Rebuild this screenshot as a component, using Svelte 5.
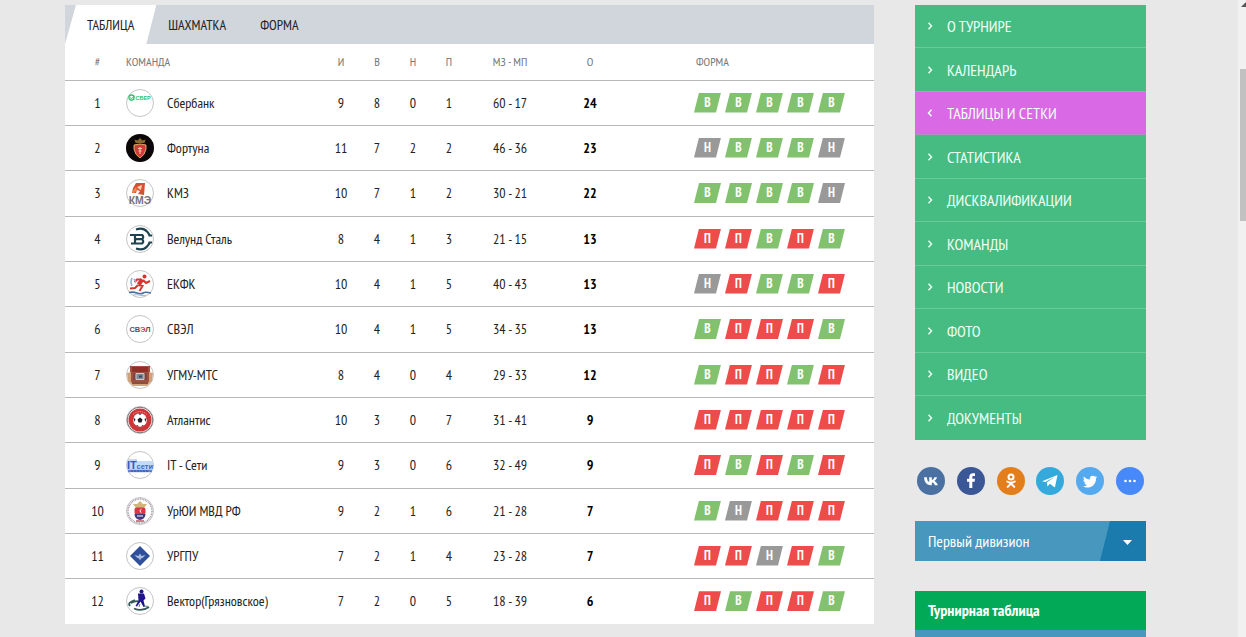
<script lang="ts">
	interface Team {
		name: string;
		logo: string;
		stats: number[];
		goals: string;
		points: number;
		form: string;
	}

	const teams: Team[] = [
		{ name: 'Сбербанк', logo: 'sber', stats: [9, 8, 0, 1], goals: '60 - 17', points: 24, form: 'ВВВВВ' },
		{ name: 'Фортуна', logo: 'fortuna', stats: [11, 7, 2, 2], goals: '46 - 36', points: 23, form: 'НВВВН' },
		{ name: 'КМЗ', logo: 'kmz', stats: [10, 7, 1, 2], goals: '30 - 21', points: 22, form: 'ВВВВН' },
		{ name: 'Велунд Сталь', logo: 'velund', stats: [8, 4, 1, 3], goals: '21 - 15', points: 13, form: 'ППВПВ' },
		{ name: 'ЕКФК', logo: 'ekfk', stats: [10, 4, 1, 5], goals: '40 - 43', points: 13, form: 'НПВВП' },
		{ name: 'СВЭЛ', logo: 'svel', stats: [10, 4, 1, 5], goals: '34 - 35', points: 13, form: 'ВПППВ' },
		{ name: 'УГМУ-МТС', logo: 'ugmu', stats: [8, 4, 0, 4], goals: '29 - 33', points: 12, form: 'ВППВП' },
		{ name: 'Атлантис', logo: 'atlantis', stats: [10, 3, 0, 7], goals: '31 - 41', points: 9, form: 'ППППП' },
		{ name: 'IT - Сети', logo: 'it', stats: [9, 3, 0, 6], goals: '32 - 49', points: 9, form: 'ПВПВП' },
		{ name: 'УрЮИ МВД РФ', logo: 'mvd', stats: [9, 2, 1, 6], goals: '21 - 28', points: 7, form: 'ВНППП' },
		{ name: 'УРГПУ', logo: 'urgpu', stats: [7, 2, 1, 4], goals: '23 - 28', points: 7, form: 'ППНПВ' },
		{ name: 'Вектор(Грязновское)', logo: 'vektor', stats: [7, 2, 0, 5], goals: '18 - 39', points: 6, form: 'ПВППВ' }
	];

	const tabs = ['ТАБЛИЦА', 'ШАХМАТКА', 'ФОРМА'];
	const menu = [
		'О ТУРНИРЕ',
		'КАЛЕНДАРЬ',
		'ТАБЛИЦЫ И СЕТКИ',
		'СТАТИСТИКА',
		'ДИСКВАЛИФИКАЦИИ',
		'КОМАНДЫ',
		'НОВОСТИ',
		'ФОТО',
		'ВИДЕО',
		'ДОКУМЕНТЫ'
	];
	const socials = ['vk', 'facebook', 'ok', 'telegram', 'twitter', 'more'];
	const results: Record<string, string> = { В: 'win', Н: 'draw', П: 'loss' };

	let activeTab = $state('ТАБЛИЦА');
	let activeMenu = $state('ТАБЛИЦЫ И СЕТКИ');
</script>

{#snippet teamLogo(logo: string)}
	<svg class="logo" viewBox="0 0 28 28" aria-hidden="true">
		<circle cx="14" cy="14" r="13.5" fill="#fff" stroke="#c4c4c8" />
		{#if logo === 'sber'}
			<circle cx="5.5" cy="8.6" r="2.6" fill="none" stroke="#35bf70" stroke-width="1.3" />
			<path d="M4 8.5l1.6 1 3-2.4" fill="none" stroke="#35bf70" />
			<text x="9.5" y="10.6" font-size="5.5" font-weight="700" fill="#35bf70">СБЕР</text>
		{:else if logo === 'fortuna'}
			<circle cx="14" cy="14" r="14" fill="#0b0708" />
			<path d="M8.5 5.5l3 1L14 4l2.5 2.5 3-1-1 3.5h-9z" fill="#8a6a2c" />
			<path d="M8 11q6-2 12 0v4q-1 6-6 9-5-3-6-9z" fill="#d33b3b" stroke="#d9a765" />
			<path d="M14 13v7M12 14.5h4M12.5 17h3" stroke="#f5c9ae" />
		{:else if logo === 'kmz'}
			<path d="M10 4h9l-1 12-6-1 2-3-3-1-1 3H6l1-5z" fill="#d94f31" />
			<path d="M11 8l5-2-1 5-2-1z" fill="#fbd2b0" />
			<path d="M6 13l4-5 1 3-3 3z" fill="#f08b4b" />
			<text x="14" y="25" font-size="10.5" font-weight="700" text-anchor="middle" fill="#77727b">КМЭ</text>
		{:else if logo === 'velund'}
			<g fill="none" stroke="#1d4350" stroke-width="2.2">
				<path d="M10 4.5q7-2.5 11 2 2 2 2.5 4H26M10 23.5q7 2.5 11-2 2-2 2.5-4H26" />
				<path d="M4 10h12q2.5 1.800 0 4.200 2.500 2.400 0 4.300H5M9 10v8M9 14.200h7" />
			</g>
		{:else if logo === 'ekfk'}
			<circle cx="18.5" cy="6.5" r="2" fill="#d8342f" />
			<path d="M16.5 9.5l-4 5" fill="none" stroke="#d8342f" stroke-width="4" />
			<path d="M17 10l3 3 4-2M15 9.5h-4L8.5 12M12.5 15l4 1-3 5M12 15l-3 3-5 .5" fill="none" stroke="#d8342f" stroke-width="2" />
			<path d="M6 8q-2 4 0 8M8 9l2 3" fill="none" stroke="#9aabcb" stroke-width="1.5" />
			<path d="M3 22.5q4-1 8 .5t6 0 8 0" fill="none" stroke="#4a6e9f" stroke-width="1.6" />
			<path d="M7 25.2q4-1 7 0t6 0" fill="none" stroke="#9db7d2" />
		{:else if logo === 'svel'}
			<text x="14" y="16.5" font-size="7.5" font-weight="700" text-anchor="middle" fill="#545060">СВ<tspan fill="#d64368">Э</tspan>Л</text>
		{:else if logo === 'ugmu'}
			<path d="M4 5h20v17H4z" fill="#a4503f" />
			<path d="M1 12l4-1v10h18V11l4 1-1 8-5 5H7l-5-5z" fill="#d0a27a" />
			<path d="M6 6h16v5H6z" fill="#8f2f28" />
			<path d="M7 12h14v7H7z" fill="#7b4648" />
			<path d="M10 12.5h8v6h-8z" fill="#7e8798" stroke="#d3c8c4" />
			<path d="M13 14.5h3v2h-3z" fill="#3e4560" />
			<path d="M6 22h16" stroke="#713330" stroke-width="1.5" />
		{:else if logo === 'atlantis'}
			<circle cx="14" cy="14" r="12.8" fill="#fff" stroke="#77706f" />
			<circle cx="14" cy="14" r="11.5" fill="#ce3539" />
			<path d="M7 8.5q7-6 14 0" fill="none" stroke="#e8aaa5" stroke-dasharray="1 1" />
			<circle cx="14" cy="14" r="6.8" fill="#fff" />
			<path d="M14 11.5l2.5 2-1 3h-3l-1-3zM12 7.5h4L14 9zM7.5 12l2 1-1 3zM20.5 12l-2 1 1 3zM10 19l2 .2.5 1.5zM18 19l-2 .2-.5 1.5z" fill="#20202b" />
		{:else if logo === 'it'}
			<path d="M1 8h10v2h16v9l-2 2H3l-2-2z" fill="#c5daf6" />
			<text x="1" y="17.5" font-size="11" font-weight="700" fill="#315cbd">IT</text>
			<text x="10.5" y="17.5" font-size="7.5" font-weight="700" fill="#3d67c3">сети</text>
			<path d="M2 20h24" stroke="#5b83cd" stroke-width="2.4" />
			<path d="M5 20h18" stroke="#2e4f9c" stroke-dasharray="2 1" />
		{:else if logo === 'mvd'}
			<circle cx="14" cy="14" r="12" fill="none" stroke="#a796a5" stroke-width="1.5" stroke-dasharray="1 .7" />
			<path d="M7 7h4l3-3 3 3h4l-3 4h-8z" fill="#d0b678" />
			<rect x="8.5" y="10.5" width="11" height="7" rx="2" fill="#d83845" />
			<path d="M8.5 17h11q0 5-5.5 6-5.5-1-5.5-6z" fill="#403b7a" />
			<path d="M15.5 12.2q-3 1-.5 3.5M11 19h6" fill="none" stroke="#fff" />
			<path d="M10 24h8" stroke="#c85061" stroke-width="1.5" />
		{:else if logo === 'urgpu'}
			<path d="M14 4l10 10-10 10L4 14z" fill="#2f4f9b" />
			<path d="M8.5 13l4 1 1.5-2.5 1.5 2.5 4-1-3 3-1.5.5-1 2-1-2-1.5-.5z" fill="#a9bde0" />
		{:else}
			<path d="M9 13q-8 2.5-5 6M8 21.5q8 3.5 15-1.5M5 16q5-2.5 8-1.5" fill="none" stroke="#345a57" stroke-width="1.8" />
			<circle cx="15.5" cy="4.5" r="2" fill="#21158b" />
			<path d="M12 6.5h6l1.5 5-2 2 1.5 6-1.5.5-3-5.5-3.5 5-1.5-.5 3-5.5z" fill="#21158b" />
			<path d="M14 17l-1 3M19 19l3 .5" stroke="#60847b" />
		{/if}
	</svg>
{/snippet}

{#snippet socialIcon(name: string)}
	<svg viewBox="0 0 28 28" aria-hidden="true">
		{#if name === 'vk'}
			<path d="M14.2 18.2C9.7 18.2 7.3 15.4 7.1 10.3h2.8c.1 3.2 1.3 4.5 2.3 4.8v-4.8h2.6v2.7c1.2-.1 2.2-1.4 2.6-2.7H20c-.4 1.8-1.6 3.1-2.6 3.7 1 .5 2.7 1.8 3.4 4.2h-2.9c-.5-1.4-1.5-2.4-3.1-2.6v2.6z" />
		{:else if name === 'facebook'}
			<path d="M12.3 21v-6.3H10v-2.9h2.3V10c0-2.5 1.3-3.8 3.7-3.8h2v2.7h-1.4c-1.1 0-1.3.5-1.3 1.4v1.5H18l-.4 2.9h-2.3V21z" />
		{:else if name === 'ok'}
			<circle cx="14" cy="10" r="2.5" fill="none" stroke="#fff" stroke-width="2" />
			<path d="M10.2 14.5q3.8 2.4 7.6 0M14 16v1M14 16.5l-3.3 3.4M14 16.5l3.3 3.4" fill="none" stroke="#fff" stroke-width="2" stroke-linecap="round" />
		{:else if name === 'telegram'}
			<path d="M6 14.2L21.5 8l-2.6 12.5-5-3.7-2.4 2.8-.7-4.1 7.7-5.5-9.2 5z" />
		{:else if name === 'twitter'}
			<path d="M21.5 9.7l-1.5 1.5c.2 6.1-4.3 9.3-8.5 9.3-1.7 0-3.2-.5-4.5-1.3 1.6.1 3-.3 4.2-1.2-1.3 0-2.3-.9-2.7-2h1.2c-1.4-.4-2.3-1.5-2.3-2.9l1.3.3c-1.3-1-1.5-2.5-.8-3.9 1.5 1.8 3.5 2.9 6 3-.5-2.2 1-3.7 2.9-3.7.9 0 1.6.3 2.2.9l1.8-.7-1.2 1.5z" />
		{:else}
			<circle cx="9.5" cy="14" r="1.3" />
			<circle cx="14" cy="14" r="1.3" />
			<circle cx="18.5" cy="14" r="1.3" />
		{/if}
	</svg>
{/snippet}

<div class="page">
	<div class="content">
		<main>
			<div class="tabs">
				{#each tabs as tab}
					<button class:active={activeTab === tab} onclick={() => (activeTab = tab)}>{tab}</button>
				{/each}
			</div>
			<table>
				<colgroup>
					<col class="col-place" />
					<col class="col-team" />
					<col class="col-stat" span="4" />
					<col class="col-goals" />
					<col class="col-points" />
					<col />
				</colgroup>
				<thead>
					<tr>
						<th class="place">#</th>
						<th class="team">КОМАНДА</th>
						<th>И</th>
						<th>В</th>
						<th>Н</th>
						<th>П</th>
						<th>МЗ - МП</th>
						<th>О</th>
						<th class="form">ФОРМА</th>
					</tr>
				</thead>
				<tbody>
					{#each teams as team, i}
						<tr>
							<td class="place">{i + 1}</td>
							<td class="team">
								<a href="#team-{i + 1}">
									{@render teamLogo(team.logo)}
									{team.name}
								</a>
							</td>
							{#each team.stats as value}
								<td>{value}</td>
							{/each}
							<td>{team.goals}</td>
							<td class="points">{team.points}</td>
							<td class="form">
								<div class="results">
									{#each team.form as result}
										<span class="result {results[result]}">{result}</span>
									{/each}
								</div>
							</td>
						</tr>
					{/each}
				</tbody>
			</table>
		</main>

		<aside>
			<nav>
				{#each menu as item, i}
					<a href="#menu-{i + 1}" class:active={activeMenu === item} onclick={() => (activeMenu = item)}>
						<svg viewBox="0 0 6 8" aria-hidden="true">
							<path d={activeMenu === item ? 'M4.5 .7L1.5 4l3 3.3' : 'M1.5 .7l3 3.3-3 3.3'} />
						</svg>
						{item}
					</a>
				{/each}
			</nav>

			<div class="socials">
				{#each socials as name}
					<a href="#{name}" class={name} aria-label={name}>{@render socialIcon(name)}</a>
				{/each}
			</div>

			<div class="division">
				<select aria-label="Дивизион">
					<option>Первый дивизион</option>
				</select>
				<svg class="caret" viewBox="0 0 46 40" aria-hidden="true">
					<path d="M10 0h36v40H0z" fill="#1b7bad" />
					<path d="M23 19h9l-4.5 5z" fill="#fff" />
				</svg>
			</div>

			<section>
				<h3>Турнирная таблица</h3>
				<div class="standings"></div>
			</section>
		</aside>
	</div>

	<div class="scrollbar" aria-hidden="true">
		<svg viewBox="0 0 8 8"><path d="M3 7l5-5v5z" /></svg>
		<div class="thumb"></div>
	</div>
</div>

<style>
	:global(body) {
		background: #e8e8e8;
	}

	.page {
		display: flex;
		height: 100vh;
		overflow: hidden;
		font-family: 'PT Sans Narrow', 'Liberation Sans Narrow', 'Open Sans', sans-serif;
		font-size: 14px;
		color: #222;
	}

	.content {
		flex: 1;
		display: grid;
		grid-template-columns: minmax(0, 7fr) minmax(0, 2fr);
		align-items: start;
		gap: 41px;
		padding: 5px 92px 0 65px;
	}

	a {
		color: inherit;
		text-decoration: none;
	}

	button,
	select {
		border: 0;
		font: inherit;
		color: inherit;
		cursor: pointer;
	}

	main {
		background: #fff;
	}

	.tabs {
		display: flex;
		height: 39px;
		background: #d1d5dc;
	}

	.tabs button {
		padding: 0 22px;
		background: none;
	}

	.tabs button + button {
		margin-left: -10px;
	}

	.tabs .active {
		background: #fff;
		clip-path: polygon(11px 0, 100% 0, calc(100% - 10px) 100%, 0 100%);
	}

	table {
		width: 100%;
		table-layout: fixed;
		border-collapse: collapse;
	}

	.col-place {
		width: 61px;
	}

	.col-team {
		width: 197px;
	}

	.col-stat {
		width: 36px;
	}

	.col-goals {
		width: 86px;
	}

	.col-points {
		width: 74px;
	}

	th,
	td {
		height: 45px;
		box-sizing: border-box;
		padding: 0;
		text-align: center;
		white-space: nowrap;
	}

	tbody tr {
		border-top: 1px solid #b8b8b8;
	}

	tbody tr:nth-child(3n) td {
		height: 46px;
	}

	th {
		height: 36px;
		font-size: 12px;
		font-weight: 400;
		color: #777;
	}

	.place {
		padding-left: 4px;
	}

	.team {
		text-align: left;
	}

	.team a {
		display: flex;
		align-items: center;
		gap: 13px;
	}

	.logo {
		width: 28px;
		height: 28px;
		font-family: 'Liberation Sans', sans-serif;
	}

	.points {
		font-weight: 700;
		color: #000;
	}

	.form {
		padding-left: 67px;
		text-align: left;
	}

	th.form {
		padding-left: 69px;
	}

	.results {
		display: flex;
		gap: 4px;
	}

	.result {
		width: 27px;
		line-height: 20px;
		text-align: center;
		font-size: 13px;
		font-weight: 700;
		color: #fff;
		clip-path: polygon(5px 0, 100% 0, calc(100% - 5px) 100%, 0 100%);
	}

	.win {
		background: #82c26e;
	}

	.draw {
		background: #999;
	}

	.loss {
		background: #ee4b4b;
	}

	nav a {
		display: flex;
		align-items: center;
		gap: 14px;
		height: 43px;
		box-sizing: border-box;
		padding-left: 12px;
		border-bottom: 1px solid #69cb99;
		background: #47bc82;
		font-size: 16px;
		color: #f0fff6;
	}

	nav a:nth-child(even) {
		height: 44px;
	}

	nav a:last-child {
		border-bottom: 0;
	}

	nav .active {
		background: #d969e5;
		border-color: #b091b8;
	}

	nav svg {
		width: 6px;
		height: 8px;
		fill: none;
		stroke: #e4ffef;
		stroke-width: 1.5;
	}

	.socials {
		display: flex;
		justify-content: space-between;
		padding: 27px 2px 26px;
	}

	.socials a {
		width: 28px;
		height: 28px;
		border-radius: 50%;
	}

	.socials svg {
		display: block;
		fill: #fff;
	}

	.vk {
		background: #4a71a2;
	}

	.facebook {
		background: #3b5796;
	}

	.ok {
		background: #e27f1c;
	}

	.telegram {
		background: #36a9dc;
	}

	.twitter {
		background: #55a9ee;
	}

	.more {
		background: #4789f8;
	}

	.division {
		position: relative;
		height: 40px;
		background: #4797bf;
	}

	select {
		width: 100%;
		height: 100%;
		padding: 0 50px 0 13px;
		appearance: none;
		background: none;
		font-size: 16px;
		color: #fff;
	}

	.caret {
		position: absolute;
		top: 0;
		right: 0;
		width: 46px;
		height: 40px;
		pointer-events: none;
	}

	section {
		margin-top: 30px;
	}

	h3 {
		margin: 0;
		padding-left: 13px;
		background: #02a956;
		font-size: 16px;
		line-height: 39px;
		color: #fff;
	}

	.standings {
		height: 40px;
		background: #4797bf;
	}

	.scrollbar {
		width: 8px;
		background: #f1f1f1;
	}

	.scrollbar svg {
		display: block;
		width: 8px;
		height: 8px;
		fill: #555;
	}

	.thumb {
		height: 152px;
		margin: 61px 0 0 2px;
		background: #c1c1c1;
	}
</style>
